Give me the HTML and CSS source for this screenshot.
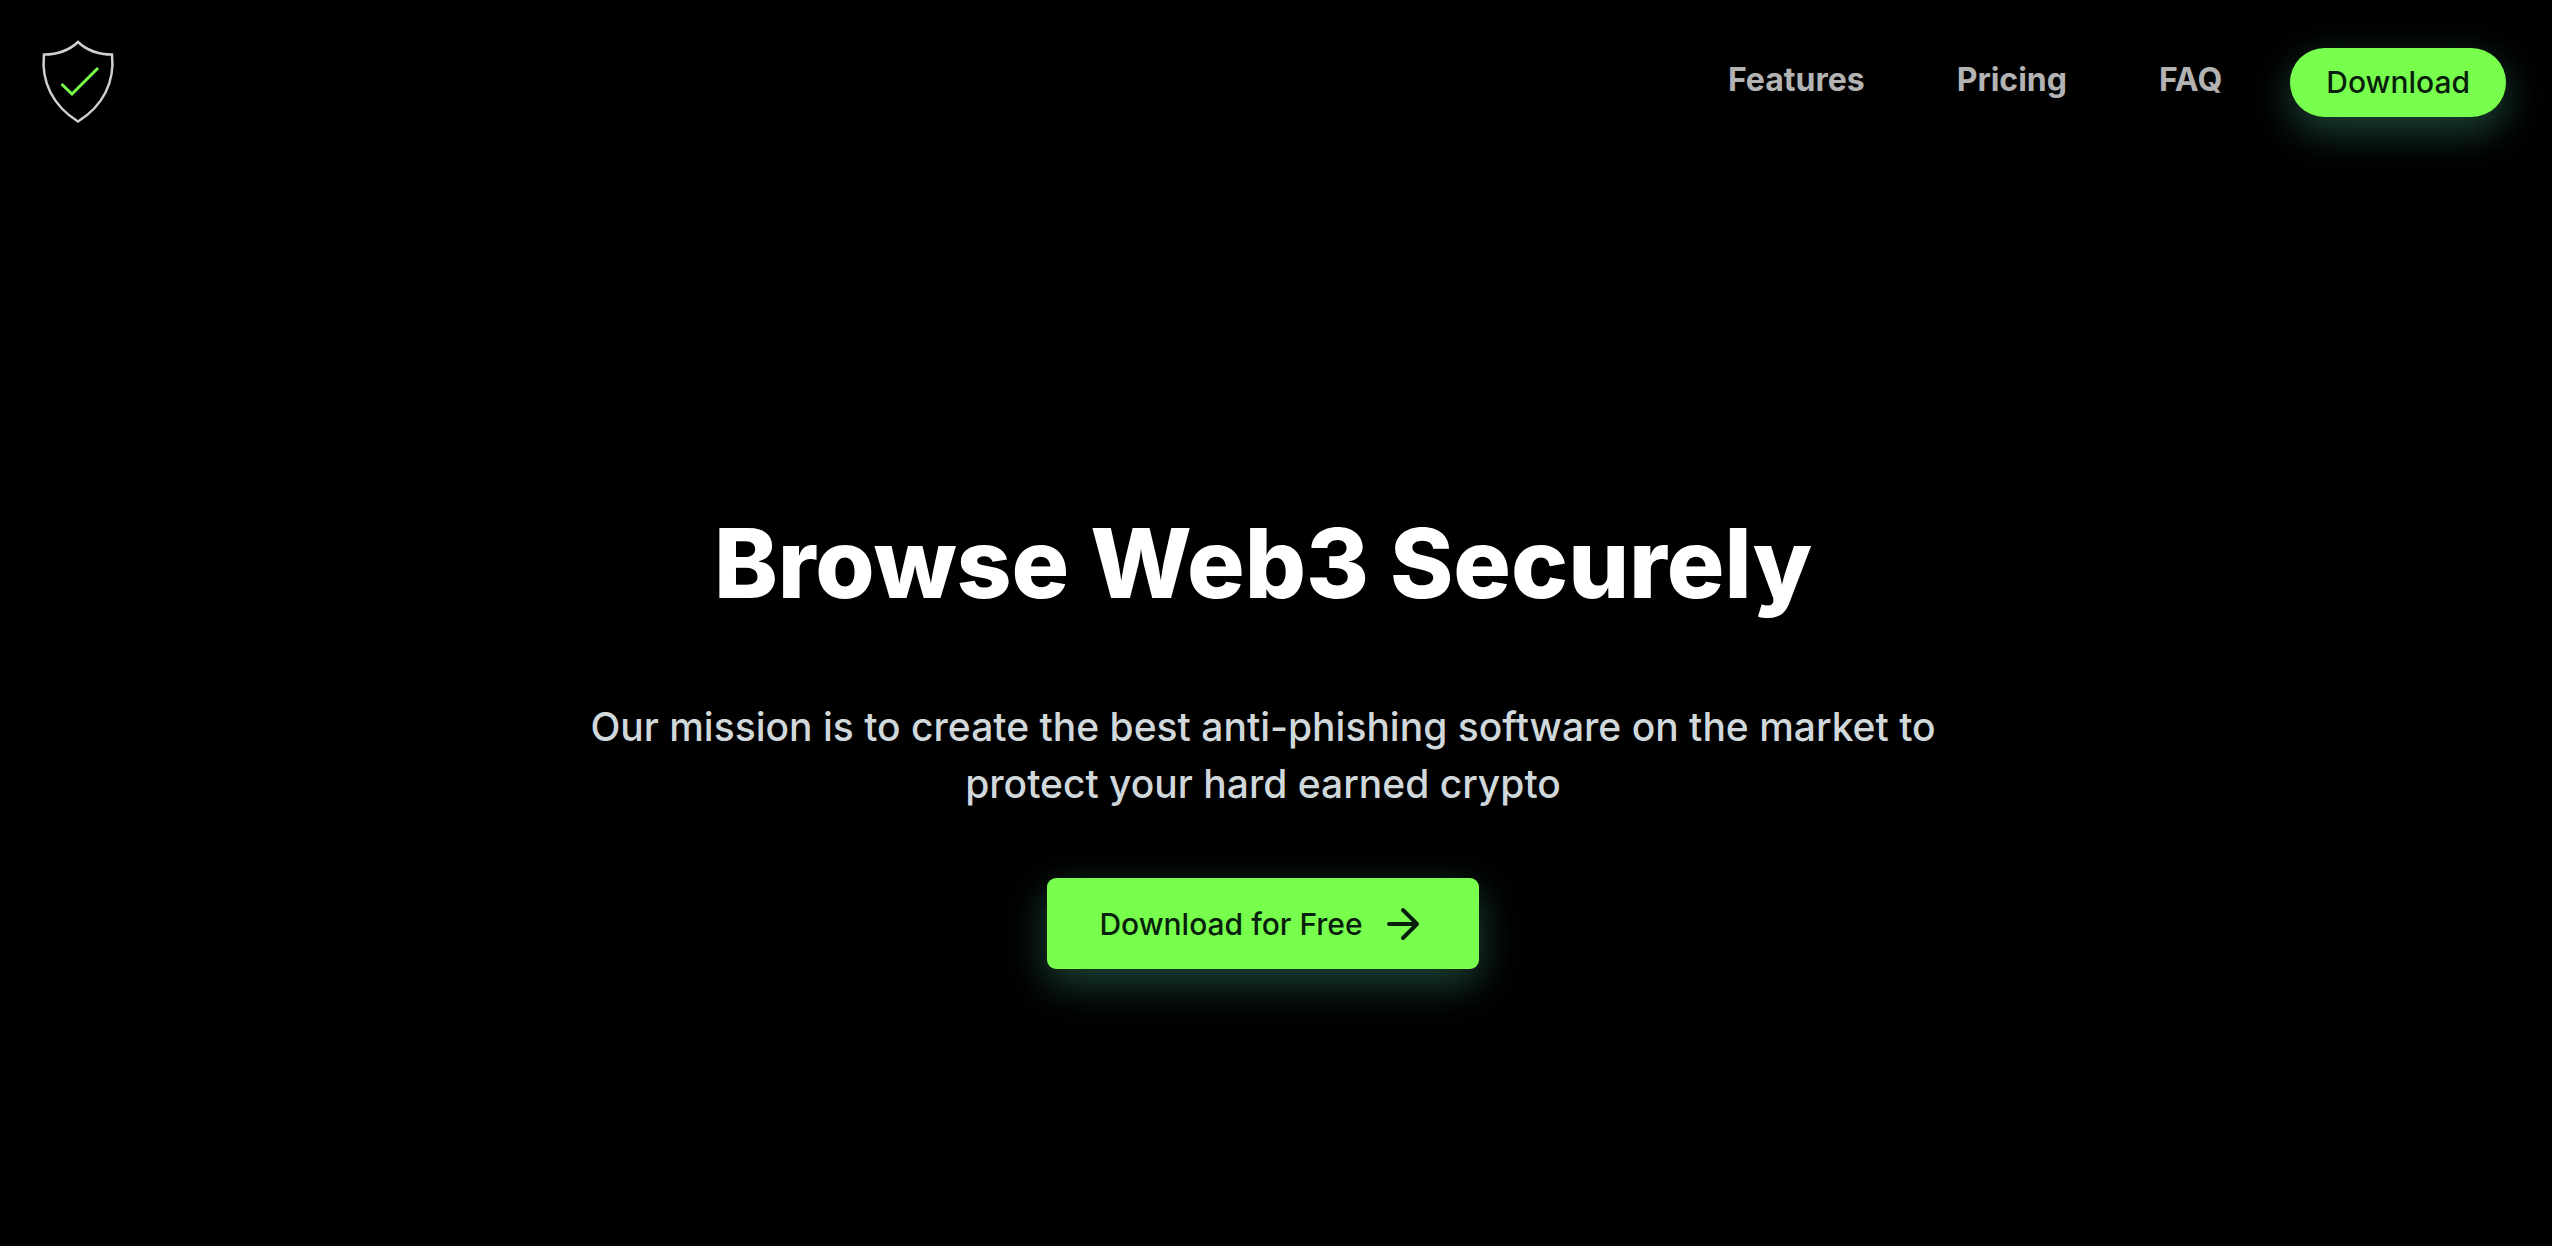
FILE: index.html
```html
<!DOCTYPE html>
<html lang="en">
<head>
<meta charset="utf-8">
<meta name="viewport" content="width=device-width, initial-scale=1">
<title>Browse Web3 Securely</title>
<link rel="stylesheet" href="styles.css">
</head>
<body>
<header class="header">
  <a class="logo" href="#" aria-label="Home">
    <svg width="76" height="86" viewBox="0 0 76 86" fill="none" aria-hidden="true">
      <path d="M38 2C29 10.500 18 14.500 4 14.500C1 42 13 66 38 81.500C63 66 75 42 72 14.500C58 14.500 47 10.500 38 2Z" stroke="#cfcfcf" stroke-width="2.500"/>
      <path d="M21.500 44L32 54L58 28" stroke="#78ff4d" stroke-width="3"/>
    </svg>
  </a>
  <nav class="nav">
    <a class="nav-link" href="#features">Features</a>
    <a class="nav-link" href="#pricing">Pricing</a>
    <a class="nav-link" href="#faq">FAQ</a>
  </nav>
  <button class="button button-pill" type="button">Download</button>
</header>
<main class="hero">
  <h1 class="title">Browse Web3 Securely</h1>
  <p class="lead">Our mission is to create the best anti-phishing software on the market to protect your hard earned crypto</p>
  <button class="button button-large" type="button">
    Download for Free
    <svg width="48" height="48" viewBox="0 0 24 24" fill="none" stroke="currentColor" stroke-width="2" stroke-linecap="round" stroke-linejoin="round" aria-hidden="true">
      <path d="M5 12h14M12 5l7 7-7 7"/>
    </svg>
  </button>
</main>
</body>
</html>
```
FILE: styles.css
```css
* {
  box-sizing: border-box;
}

body {
  margin: 0;
  min-height: 100vh;
  background: #000;
  color: #fff;
  font-family: Inter, "Liberation Sans", sans-serif;
}

.header {
  display: flex;
  align-items: center;
  padding: 40px 46px 0 40px;
}

.logo {
  display: block;
  height: 84px;
}

.nav {
  display: flex;
  gap: 92px;
  margin: 0 68px 4px auto;
}

.nav-link {
  color: #b3b3b3;
  font-size: 32px;
  line-height: 40px;
  font-weight: 700;
  text-decoration: none;
}

.button {
  display: flex;
  align-items: center;
  border: 0;
  background: #78ff4d;
  color: #071f0c;
  font: 500 30px/40px Inter, "Liberation Sans", sans-serif;
  box-shadow: 0 14px 40px rgba(52, 128, 100, 0.55);
  cursor: pointer;
}

.button-pill {
  padding: 14px 36px 15px;
  border-radius: 36px;
}

.button-large {
  gap: 16px;
  padding: 22px 52px 21px;
  border-radius: 9px;
}

.hero {
  display: flex;
  flex-direction: column;
  align-items: center;
  padding: 379px 26px 80px 0;
  text-align: center;
}

.title {
  margin: 0 0 75px;
  font-size: 96px;
  line-height: 120px;
  font-weight: 800;
}

.lead {
  max-width: 1400px;
  margin: 0 0 66px;
  color: #d1d8db;
  font-size: 39px;
  line-height: 57px;
  font-weight: 500;
}
```
